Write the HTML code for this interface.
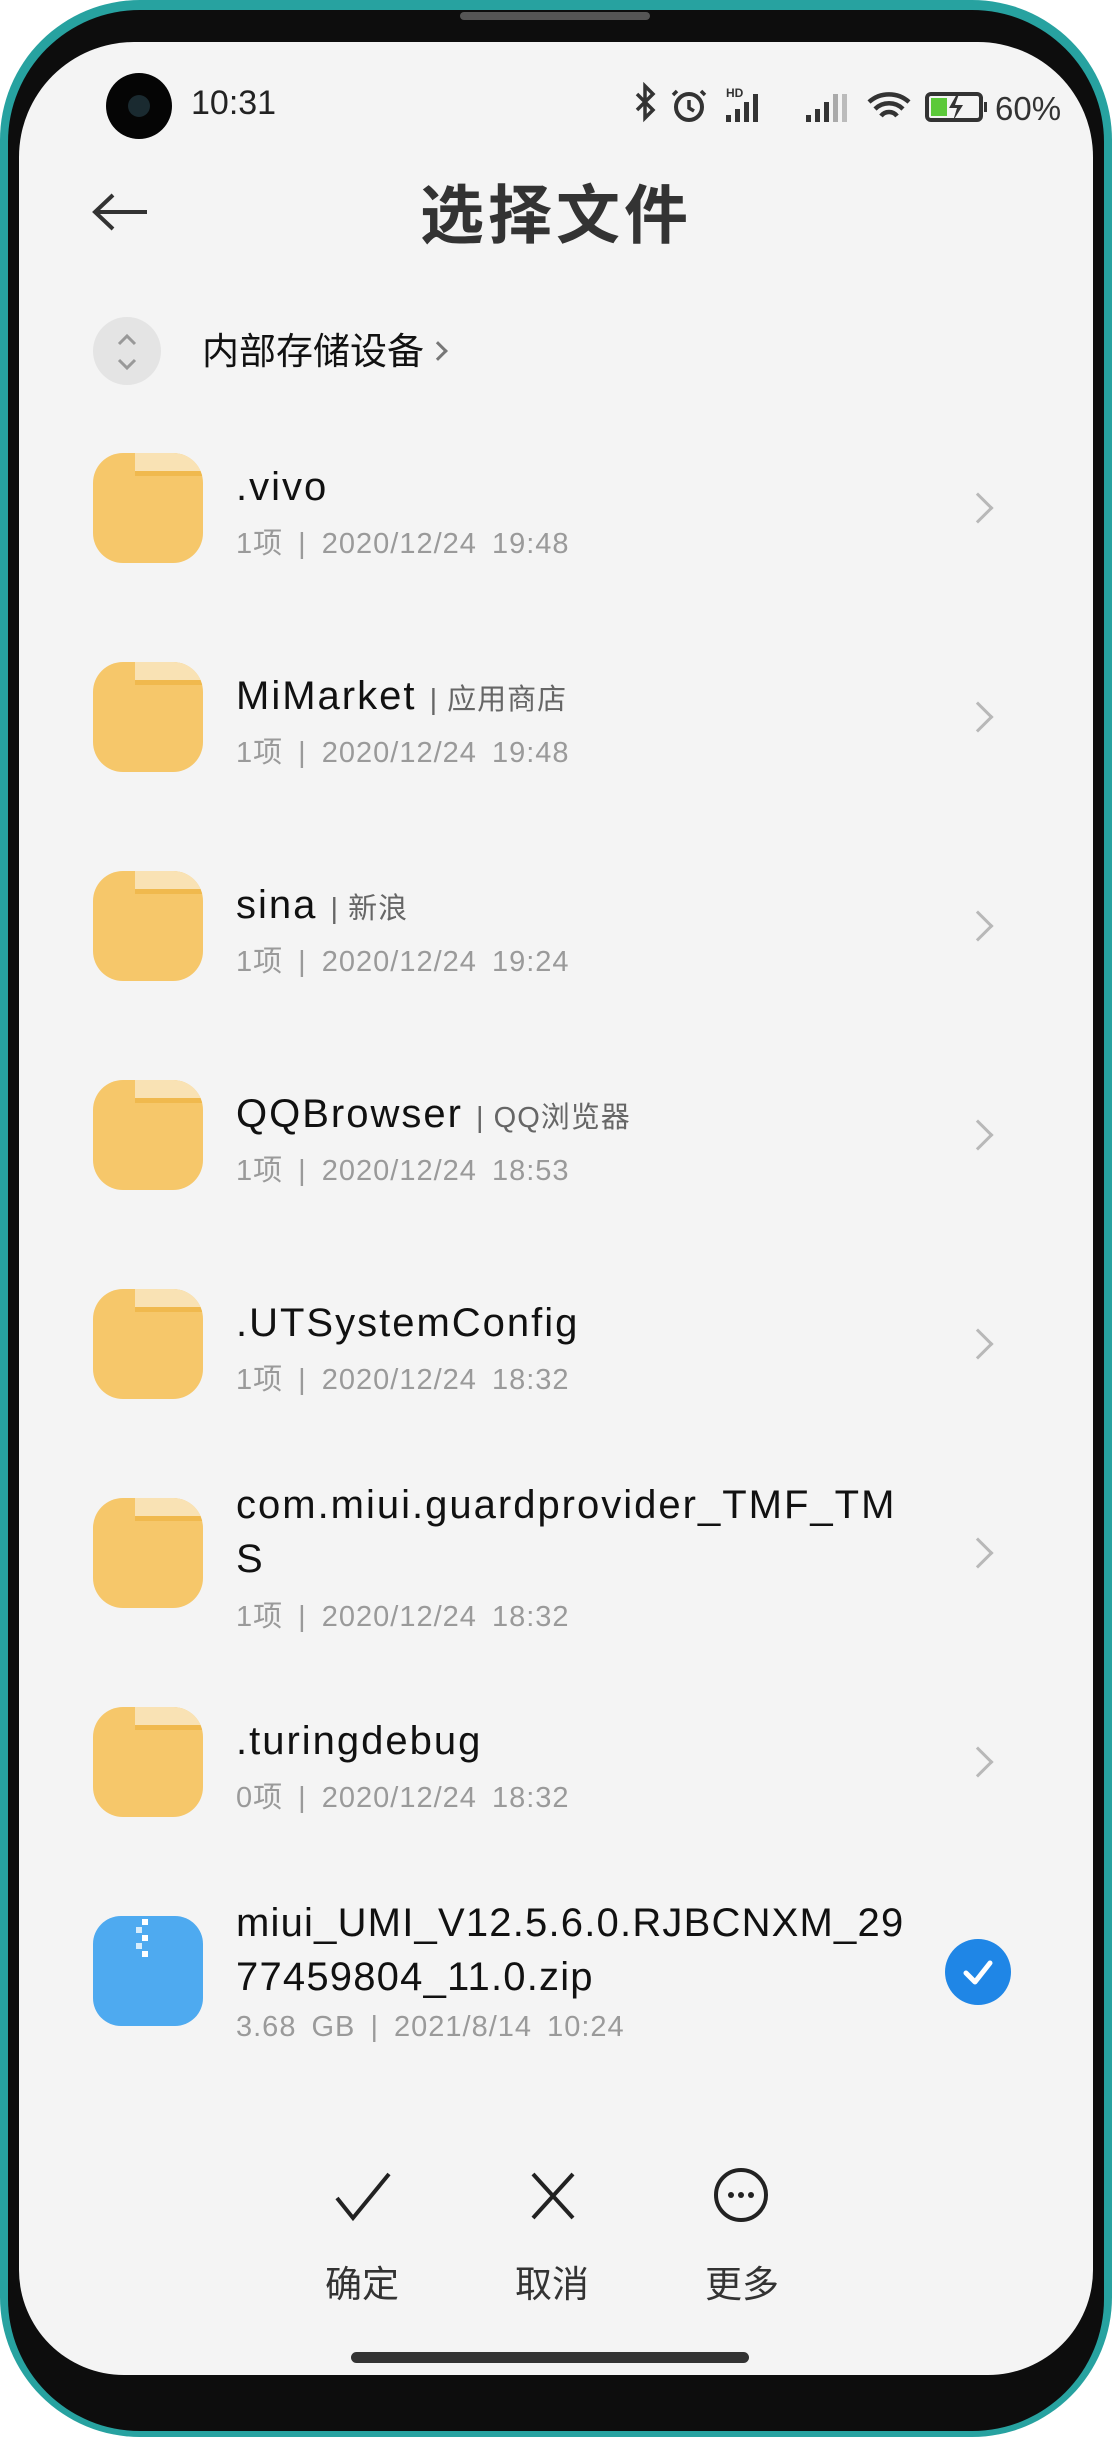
<!DOCTYPE html>
<html><head><meta charset="utf-8"><style>
*{margin:0;padding:0;box-sizing:border-box}
body{width:1112px;height:2437px;background:#fff;position:relative;overflow:hidden;font-family:"Liberation Sans","Noto Sans CJK SC",sans-serif}
.frame{position:absolute;left:0;top:0;width:1112px;height:2437px;background:#27a2a0;border-radius:140px}
.black{position:absolute;left:8px;top:10px;right:8px;bottom:6px;background:#0d0d0d;border-radius:132px}
.screen{position:absolute;left:19px;top:42px;width:1074px;height:2333px;background:#f4f4f4;border-radius:115px 115px 105px 105px;overflow:hidden}
.a{position:absolute}
.folder{position:absolute;left:74px;width:110px;height:110px;background:#f6c76a;border-radius:30px;overflow:hidden}
.folder:after{content:"";position:absolute;left:42px;top:0;width:68px;height:18px;background:#f9e2b4;border-radius:0 30px 0 0;border-bottom:5px solid #f0b94e}
.name{position:absolute;left:217px;font-size:40px;color:#111;line-height:54px;white-space:nowrap;letter-spacing:2px}
.tag{font-size:29px;color:#666;letter-spacing:1px}
.sub{position:absolute;left:217px;font-size:29px;color:#9a9a9a;white-space:nowrap;letter-spacing:1px;word-spacing:6px}
.chev{position:absolute;left:948px;width:22px;height:22px;border-right:3px solid #b8b8b8;border-top:3px solid #b8b8b8;transform:rotate(45deg)}
.btn{position:absolute;font-size:37px;color:#333;text-align:center;width:120px}
</style></head><body>
<div class="frame"></div><div class="black"></div>
<div class="a" style="left:460px;top:12px;width:190px;height:8px;background:#555;border-radius:4px"></div>
<div class="screen">
  <div class="a" style="left:87px;top:31px;width:66px;height:66px;border-radius:50%;background:#050505"><div class="a" style="left:22px;top:22px;width:22px;height:22px;border-radius:50%;background:#1a2a30"></div></div>
  <div class="a" style="left:172px;top:42px;font-size:34px;color:#222">10:31</div>
  <svg class="a" style="left:610px;top:40px" width="450" height="45" viewBox="0 0 450 45">
    <path d="M8 12 L24 28 L16 36 V4 L24 12 L8 28" fill="none" stroke="#333" stroke-width="3.5"/>
    <circle cx="60" cy="25" r="13" fill="none" stroke="#333" stroke-width="4"/><path d="M60 18v8l5 3M48 9l-4 4M72 9l4 4" stroke="#333" stroke-width="3.5" fill="none"/>
    <text x="97" y="15" font-size="12" font-weight="bold" fill="#333" font-family="Liberation Sans">HD</text>
    <rect x="97" y="33" width="5" height="7" fill="#333"/><rect x="106" y="27" width="5" height="13" fill="#333"/><rect x="115" y="20" width="5" height="20" fill="#333"/><rect x="124" y="12" width="5" height="28" fill="#333"/>
    <rect x="177" y="33" width="5" height="7" fill="#333"/><rect x="186" y="27" width="5" height="13" fill="#333"/><rect x="195" y="20" width="5" height="20" fill="#333"/><rect x="204" y="12" width="5" height="28" fill="#aaa"/><rect x="213" y="12" width="5" height="28" fill="#bbb"/>
    <path d="M240 20a30 30 0 0 1 40 0M246 27a20 20 0 0 1 28 0M252 34a10 10 0 0 1 16 0" stroke="#333" stroke-width="4.5" fill="none"/>
    <rect x="298" y="12" width="54" height="26" rx="4" fill="none" stroke="#333" stroke-width="4"/><rect x="302" y="16" width="16" height="18" fill="#5cc93a"/><path d="M328 12l-8 14h8l-4 13 10-16h-8l4-11z" fill="#333"/><rect x="355" y="20" width="3" height="10" fill="#333"/>
    <text x="366" y="38" font-size="33" fill="#333" font-family="Liberation Sans">60%</text>
  </svg>
  <svg class="a" style="left:72px;top:150px" width="60" height="40" viewBox="0 0 60 40"><path d="M56 20H4M22 3L4 20l18 17" fill="none" stroke="#333" stroke-width="4"/></svg>
  <div class="a" style="left:0;width:1074px;top:134px;text-align:center;font-size:64px;font-weight:bold;color:#333;line-height:80px;letter-spacing:4px">选择文件</div>
  <div class="a" style="left:74px;top:275px;width:68px;height:68px;border-radius:50%;background:#e4e4e4"></div>
  <svg class="a" style="left:96px;top:290px" width="24" height="40" viewBox="0 0 24 40"><path d="M4 12l8-8 8 8M4 28l8 8 8-8" fill="none" stroke="#999" stroke-width="3"/></svg>
  <div class="a" style="left:183px;top:285px;font-size:37px;color:#111;line-height:50px">内部存储设备</div>
  <div class="a" style="left:412px;top:302px;width:14px;height:14px;border-right:3px solid #777;border-top:3px solid #777;transform:rotate(45deg)"></div>

  <div class="folder" style="top:411px"></div>
  <div class="name" style="top:418px">.vivo</div>
  <div class="sub" style="top:478px">1项 | 2020/12/24 19:48</div>
  <div class="chev" style="top:455px"></div>

  <div class="folder" style="top:620px"></div>
  <div class="name" style="top:627px">MiMarket <span class="tag">| 应用商店</span></div>
  <div class="sub" style="top:687px">1项 | 2020/12/24 19:48</div>
  <div class="chev" style="top:664px"></div>

  <div class="folder" style="top:829px"></div>
  <div class="name" style="top:836px">sina <span class="tag">| 新浪</span></div>
  <div class="sub" style="top:896px">1项 | 2020/12/24 19:24</div>
  <div class="chev" style="top:873px"></div>

  <div class="folder" style="top:1038px"></div>
  <div class="name" style="top:1045px">QQBrowser <span class="tag">| QQ浏览器</span></div>
  <div class="sub" style="top:1105px">1项 | 2020/12/24 18:53</div>
  <div class="chev" style="top:1082px"></div>

  <div class="folder" style="top:1247px"></div>
  <div class="name" style="top:1254px">.UTSystemConfig</div>
  <div class="sub" style="top:1314px">1项 | 2020/12/24 18:32</div>
  <div class="chev" style="top:1291px"></div>

  <div class="folder" style="top:1456px"></div>
  <div class="name" style="top:1436px">com.miui.guardprovider_TMF_TM<br>S</div>
  <div class="sub" style="top:1551px">1项 | 2020/12/24 18:32</div>
  <div class="chev" style="top:1500px"></div>

  <div class="folder" style="top:1665px"></div>
  <div class="name" style="top:1672px">.turingdebug</div>
  <div class="sub" style="top:1732px">0项 | 2020/12/24 18:32</div>
  <div class="chev" style="top:1709px"></div>

  <div class="a" style="left:74px;top:1874px;width:110px;height:110px;background:#4eaaf0;border-radius:28px"></div>
  <svg class="a" style="left:117px;top:1877px" width="16" height="50"><rect x="6" y="0" width="6" height="6" fill="#fff"/><rect x="0" y="8" width="6" height="6" fill="#d6ecfb"/><rect x="6" y="16" width="6" height="6" fill="#fff"/><rect x="0" y="24" width="6" height="6" fill="#d6ecfb"/><rect x="6" y="32" width="6" height="6" fill="#fff"/></svg>
  <div class="name" style="top:1854px;letter-spacing:1.2px">miui_UMI_V12.5.6.0.RJBCNXM_29<br>77459804_11.0.zip</div>
  <div class="sub" style="top:1969px">3.68 GB | 2021/8/14 10:24</div>
  <div class="a" style="left:926px;top:1897px;width:66px;height:66px;border-radius:50%;background:#1f86e6"></div>
  <svg class="a" style="left:926px;top:1897px" width="66" height="66"><path d="M21 34l9 9 15-19" fill="none" stroke="#fff" stroke-width="5" stroke-linecap="round" stroke-linejoin="round"/></svg>

  <svg class="a" style="left:314px;top:2128px" width="60" height="52"><path d="M4 28l16 20L56 4" fill="none" stroke="#222" stroke-width="4"/></svg>
  <svg class="a" style="left:508px;top:2128px" width="52" height="52"><path d="M6 4l40 44M46 4L6 48" fill="none" stroke="#222" stroke-width="4"/></svg>
  <svg class="a" style="left:693px;top:2124px" width="58" height="58"><circle cx="29" cy="29" r="25" fill="none" stroke="#222" stroke-width="4"/><circle cx="19" cy="29" r="3" fill="#222"/><circle cx="29" cy="29" r="3" fill="#222"/><circle cx="39" cy="29" r="3" fill="#222"/></svg>
  <div class="btn" style="left:283px;top:2212px">确定</div>
  <div class="btn" style="left:473px;top:2212px">取消</div>
  <div class="btn" style="left:663px;top:2212px">更多</div>
  <div class="a" style="left:332px;top:2310px;width:398px;height:11px;border-radius:6px;background:#333"></div>
</div>
</body></html>
